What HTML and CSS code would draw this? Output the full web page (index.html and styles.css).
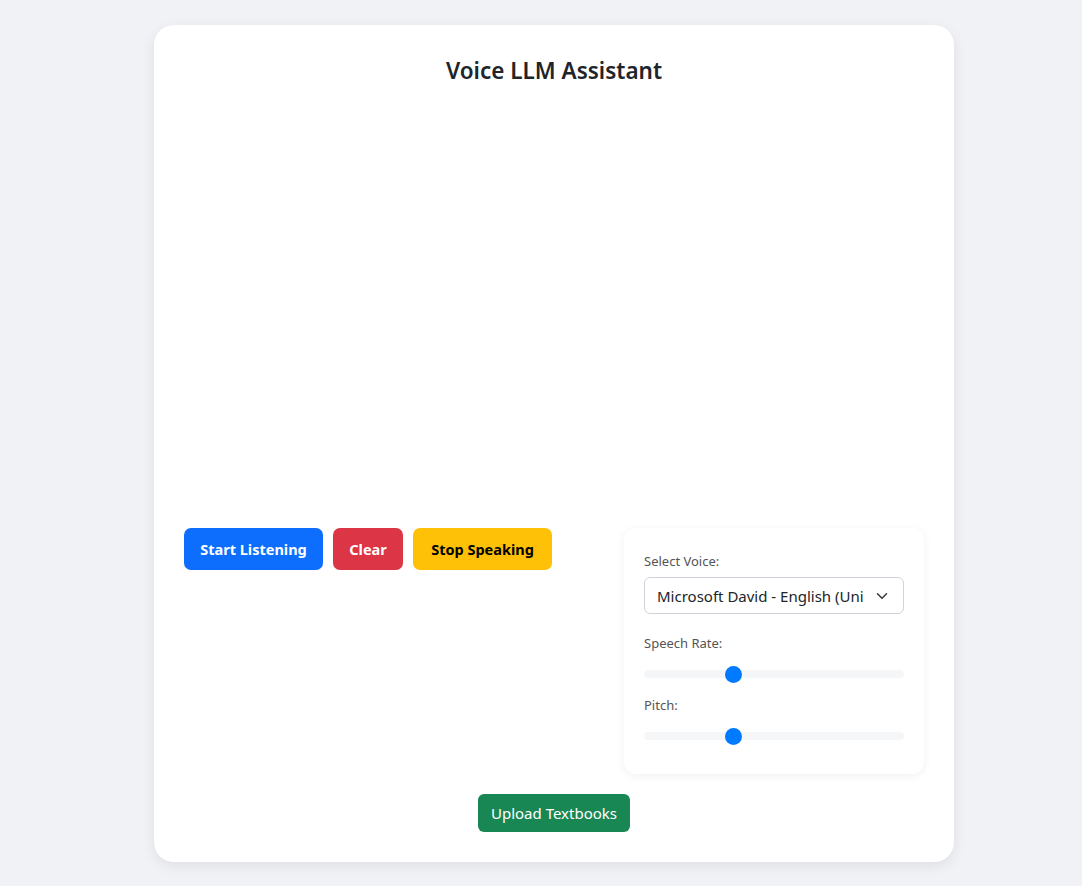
FILE: index.html
```html
<!DOCTYPE html>
<html lang="en">
<head>
<meta charset="utf-8">
<title>Voice LLM Assistant</title>
<link rel="stylesheet" href="styles.css">
</head>
<body>
<div class="card">
  <h1 class="title">Voice LLM Assistant</h1>
  <div class="chat"></div>
  <div class="main-row">
    <div class="controls">
      <button class="btn btn-blue">Start Listening</button>
      <button class="btn btn-red">Clear</button>
      <button class="btn btn-yellow">Stop Speaking</button>
    </div>
    <div class="settings">
      <label class="label">Select Voice:</label>
      <div class="select-wrap">
        <select class="select"><option>Microsoft David - English (United States)</option></select>
        <svg class="chevron" width="12" height="12" viewBox="0 0 16 16"><path d="M2 5l6 6 6-6" fill="none" stroke="#343a40" stroke-width="2" stroke-linecap="round" stroke-linejoin="round"/></svg>
      </div>
      <label class="label label-gap">Speech Rate:</label>
      <input class="range" type="range" min="0.5" max="2" step="0.1" value="1">
      <label class="label label-gap2">Pitch:</label>
      <input class="range" type="range" min="0.5" max="2" step="0.1" value="1">
    </div>
  </div>
  <div class="upload-row">
    <button class="btn-upload">Upload Textbooks</button>
  </div>
</div>
</body>
</html>
```
FILE: styles.css
```css
* { box-sizing: border-box; }
html, body { margin: 0; }
body {
  background: #f0f2f5;
  font-family: "Noto Sans", "Open Sans", sans-serif;
  padding: 25px 128px 24px 154px;
  color: #212529;
}
.card {
  background: #fff;
  border-radius: 20px;
  box-shadow: 0 4px 14px rgba(0,0,0,0.08);
  padding: 30px;
  height: 837px;
}
.title {
  margin: 0 0 20px;
  text-align: center;
  font-size: 22.5px;
  font-weight: 600;
  line-height: 32px;
  color: #212529;
}
.chat {
  height: 401px;
  margin-bottom: 20px;
}
.main-row {
  display: flex;
  justify-content: space-between;
  align-items: flex-start;
}
.controls {
  display: flex;
  gap: 10px;
}
.btn {
  border: none;
  border-radius: 7px;
  height: 42px;
  padding: 0;
  white-space: nowrap;
  font-family: inherit;
  font-size: 14.5px;
  font-weight: 700;
  color: #fff;
}
.btn-blue { background: #0d6efd; width: 139px; }
.btn-red { background: #dc3545; width: 70px; }
.btn-yellow { background: #ffc107; color: #000; width: 139px; }
.settings {
  width: 300px;
  background: #fff;
  border-radius: 12px;
  box-shadow: 0 2px 10px rgba(0,0,0,0.06);
  padding: 24px 20px 24px;
  display: flex;
  flex-direction: column;
}
.label {
  font-size: 13px;
  color: #555;
  line-height: 18px;
  margin-bottom: 7px;
}
.label-gap { margin-top: 20px; }
.label-gap2 { margin-top: 8px; }
.select-wrap { position: relative; }
.select {
  appearance: none;
  -webkit-appearance: none;
  width: 260px;
  height: 37px;
  border: 1px solid #ced4da;
  border-radius: 6px;
  background: #fff;
  padding: 0 40px 0 12px;
  font-family: inherit;
  font-size: 15px;
  color: #212529;
}
.chevron {
  position: absolute;
  right: 16px;
  top: 13px;
  pointer-events: none;
}
.range {
  -webkit-appearance: none;
  appearance: none;
  width: 260px;
  height: 8px;
  margin: 11px 0 10px;
  background: #f5f6f8;
  border-radius: 4px;
  outline: none;
}
.range::-webkit-slider-thumb {
  -webkit-appearance: none;
  width: 17px;
  height: 17px;
  border-radius: 50%;
  background: #007bff;
  border: none;
}
.upload-row {
  display: flex;
  justify-content: center;
  margin-top: 20px;
}
.btn-upload {
  background: #198754;
  color: #fff;
  border: none;
  border-radius: 6px;
  height: 38px;
  width: 152px;
  font-family: inherit;
  font-size: 15px;
  padding: 0 12px;
}
```
